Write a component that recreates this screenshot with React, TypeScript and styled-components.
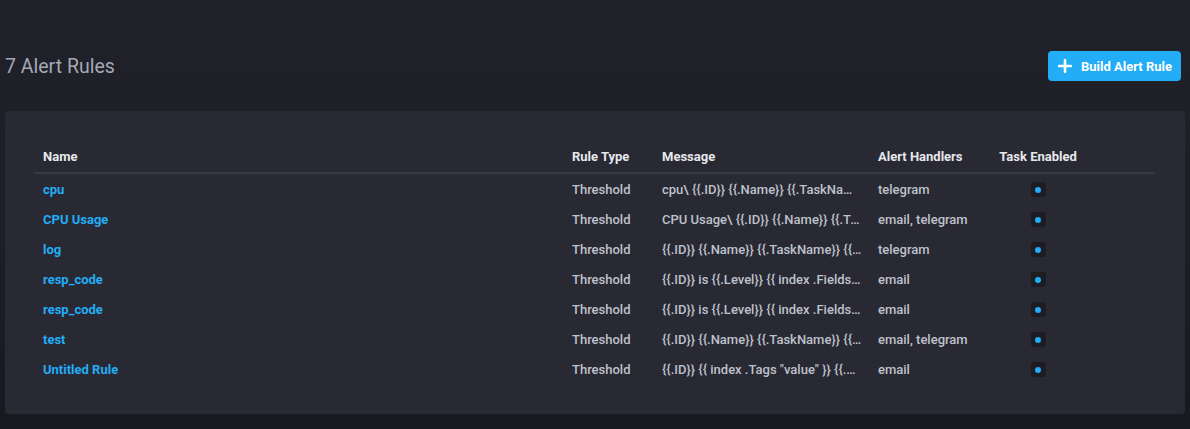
import React from "react";
import styled, { createGlobalStyle } from "styled-components";

const GlobalStyle = createGlobalStyle`
  html, body { margin: 0; padding: 0; }
  body {
    width: 1190px;
    height: 429px;
    overflow: hidden;
    background: linear-gradient(to bottom, #21212a 0%, #1d1d25 60%, #18181f 100%);
    font-family: Roboto, "Liberation Sans", sans-serif;
    -webkit-font-smoothing: antialiased;
  }
`;

const Page = styled.div`
  padding: 51px 5px 0 5px;
  box-sizing: border-box;
`;

const Header = styled.div`
  display: flex;
  align-items: center;
  justify-content: space-between;
  height: 30px;
  margin-bottom: 30px;
  padding-right: 4px;
`;

const Title = styled.h1`
  margin: 0;
  font-size: 19.5px;
  font-weight: 400;
  color: #a4a8b6;
`;

const PrimaryButton = styled.button`
  display: flex;
  align-items: center;
  gap: 9px;
  height: 30px;
  padding: 0 9px 0 10px;
  border: none;
  border-radius: 4px;
  background: #22adf6;
  color: #fff;
  font-family: Roboto, "Liberation Sans", sans-serif;
  font-size: 13px;
  font-weight: 700;
  cursor: pointer;
`;

const Panel = styled.div`
  background: #292933;
  border-radius: 4px;
  padding: 30px;
`;

const Table = styled.table`
  width: 100%;
  border-collapse: collapse;
  table-layout: fixed;
`;

const Th = styled.th<{ $w?: number; $center?: boolean }>`
  width: ${(p) => (p.$w ? `${p.$w}px` : "auto")};
  text-align: ${(p) => (p.$center ? "center" : "left")};
  padding: 0 8px;
  height: 31px;
  border-bottom: 2px solid #383846;
  color: #e7e8eb;
  font-size: 13px;
  font-weight: 700;
  white-space: nowrap;
`;

const Td = styled.td<{ $center?: boolean }>`
  padding: 0 8px;
  height: 30px;
  color: #bec2cc;
  font-size: 13px;
  font-weight: 500;
  white-space: nowrap;
  overflow: hidden;
  text-overflow: ellipsis;
  text-align: ${(p) => (p.$center ? "center" : "left")};
`;

const RuleLink = styled.a`
  color: #22adf6;
  font-weight: 700;
  font-size: 13px;
  text-decoration: none;
`;

const Check = styled.span<{ $on: boolean }>`
  display: inline-flex;
  align-items: center;
  justify-content: center;
  width: 15px;
  height: 15px;
  border-radius: 3px;
  background: #1c1c22;
  vertical-align: middle;
  &::after {
    content: "";
    width: 6px;
    height: 6px;
    border-radius: 50%;
    background: ${(p) => (p.$on ? "#22adf6" : "transparent")};
  }
`;

const rules = [
  { name: "cpu", type: "Threshold", msg: "cpu\\ {{.ID}} {{.Name}} {{.TaskName}} {{.Level}}", handlers: "telegram" },
  { name: "CPU Usage", type: "Threshold", msg: "CPU Usage\\ {{.ID}} {{.Name}} {{.TaskName}}", handlers: "email, telegram" },
  { name: "log", type: "Threshold", msg: "{{.ID}} {{.Name}} {{.TaskName}} {{.Level}}", handlers: "telegram" },
  { name: "resp_code", type: "Threshold", msg: "{{.ID}} is {{.Level}} {{ index .Fields \"value\" }}", handlers: "email" },
  { name: "resp_code", type: "Threshold", msg: "{{.ID}} is {{.Level}} {{ index .Fields \"value\" }}", handlers: "email" },
  { name: "test", type: "Threshold", msg: "{{.ID}} {{.Name}} {{.TaskName}} {{.Level}}", handlers: "email, telegram" },
  { name: "Untitled Rule", type: "Threshold", msg: "{{.ID}} {{ index .Tags \"value\" }} {{.Level}}", handlers: "email" },
];

const PlusIcon = () => (
  <svg width="14" height="14" viewBox="0 0 14 14">
    <path d="M7 1v12M1 7h12" stroke="#fff" strokeWidth="2.6" strokeLinecap="round" />
  </svg>
);

export default function App() {
  return (
    <>
      <GlobalStyle />
      <Page>
        <Header>
          <Title>7 Alert Rules</Title>
          <PrimaryButton>
            <PlusIcon />
            Build Alert Rule
          </PrimaryButton>
        </Header>
        <Panel>
          <Table>
            <thead>
              <tr>
                <Th>Name</Th>
                <Th $w={74}>Rule Type</Th>
                <Th $w={200}>Message</Th>
                <Th $w={105}>Alert Handlers</Th>
                <Th $w={78} $center>Task Enabled</Th>
                <Th $w={54} />
              </tr>
            </thead>
            <tbody>
              {rules.map((r, i) => (
                <tr key={i}>
                  <Td>
                    <RuleLink href="#">{r.name}</RuleLink>
                  </Td>
                  <Td>{r.type}</Td>
                  <Td>{r.msg}</Td>
                  <Td>{r.handlers}</Td>
                  <Td $center>
                    <Check $on />
                  </Td>
                  <Td />
                </tr>
              ))}
            </tbody>
          </Table>
        </Panel>
      </Page>
    </>
  );
}
